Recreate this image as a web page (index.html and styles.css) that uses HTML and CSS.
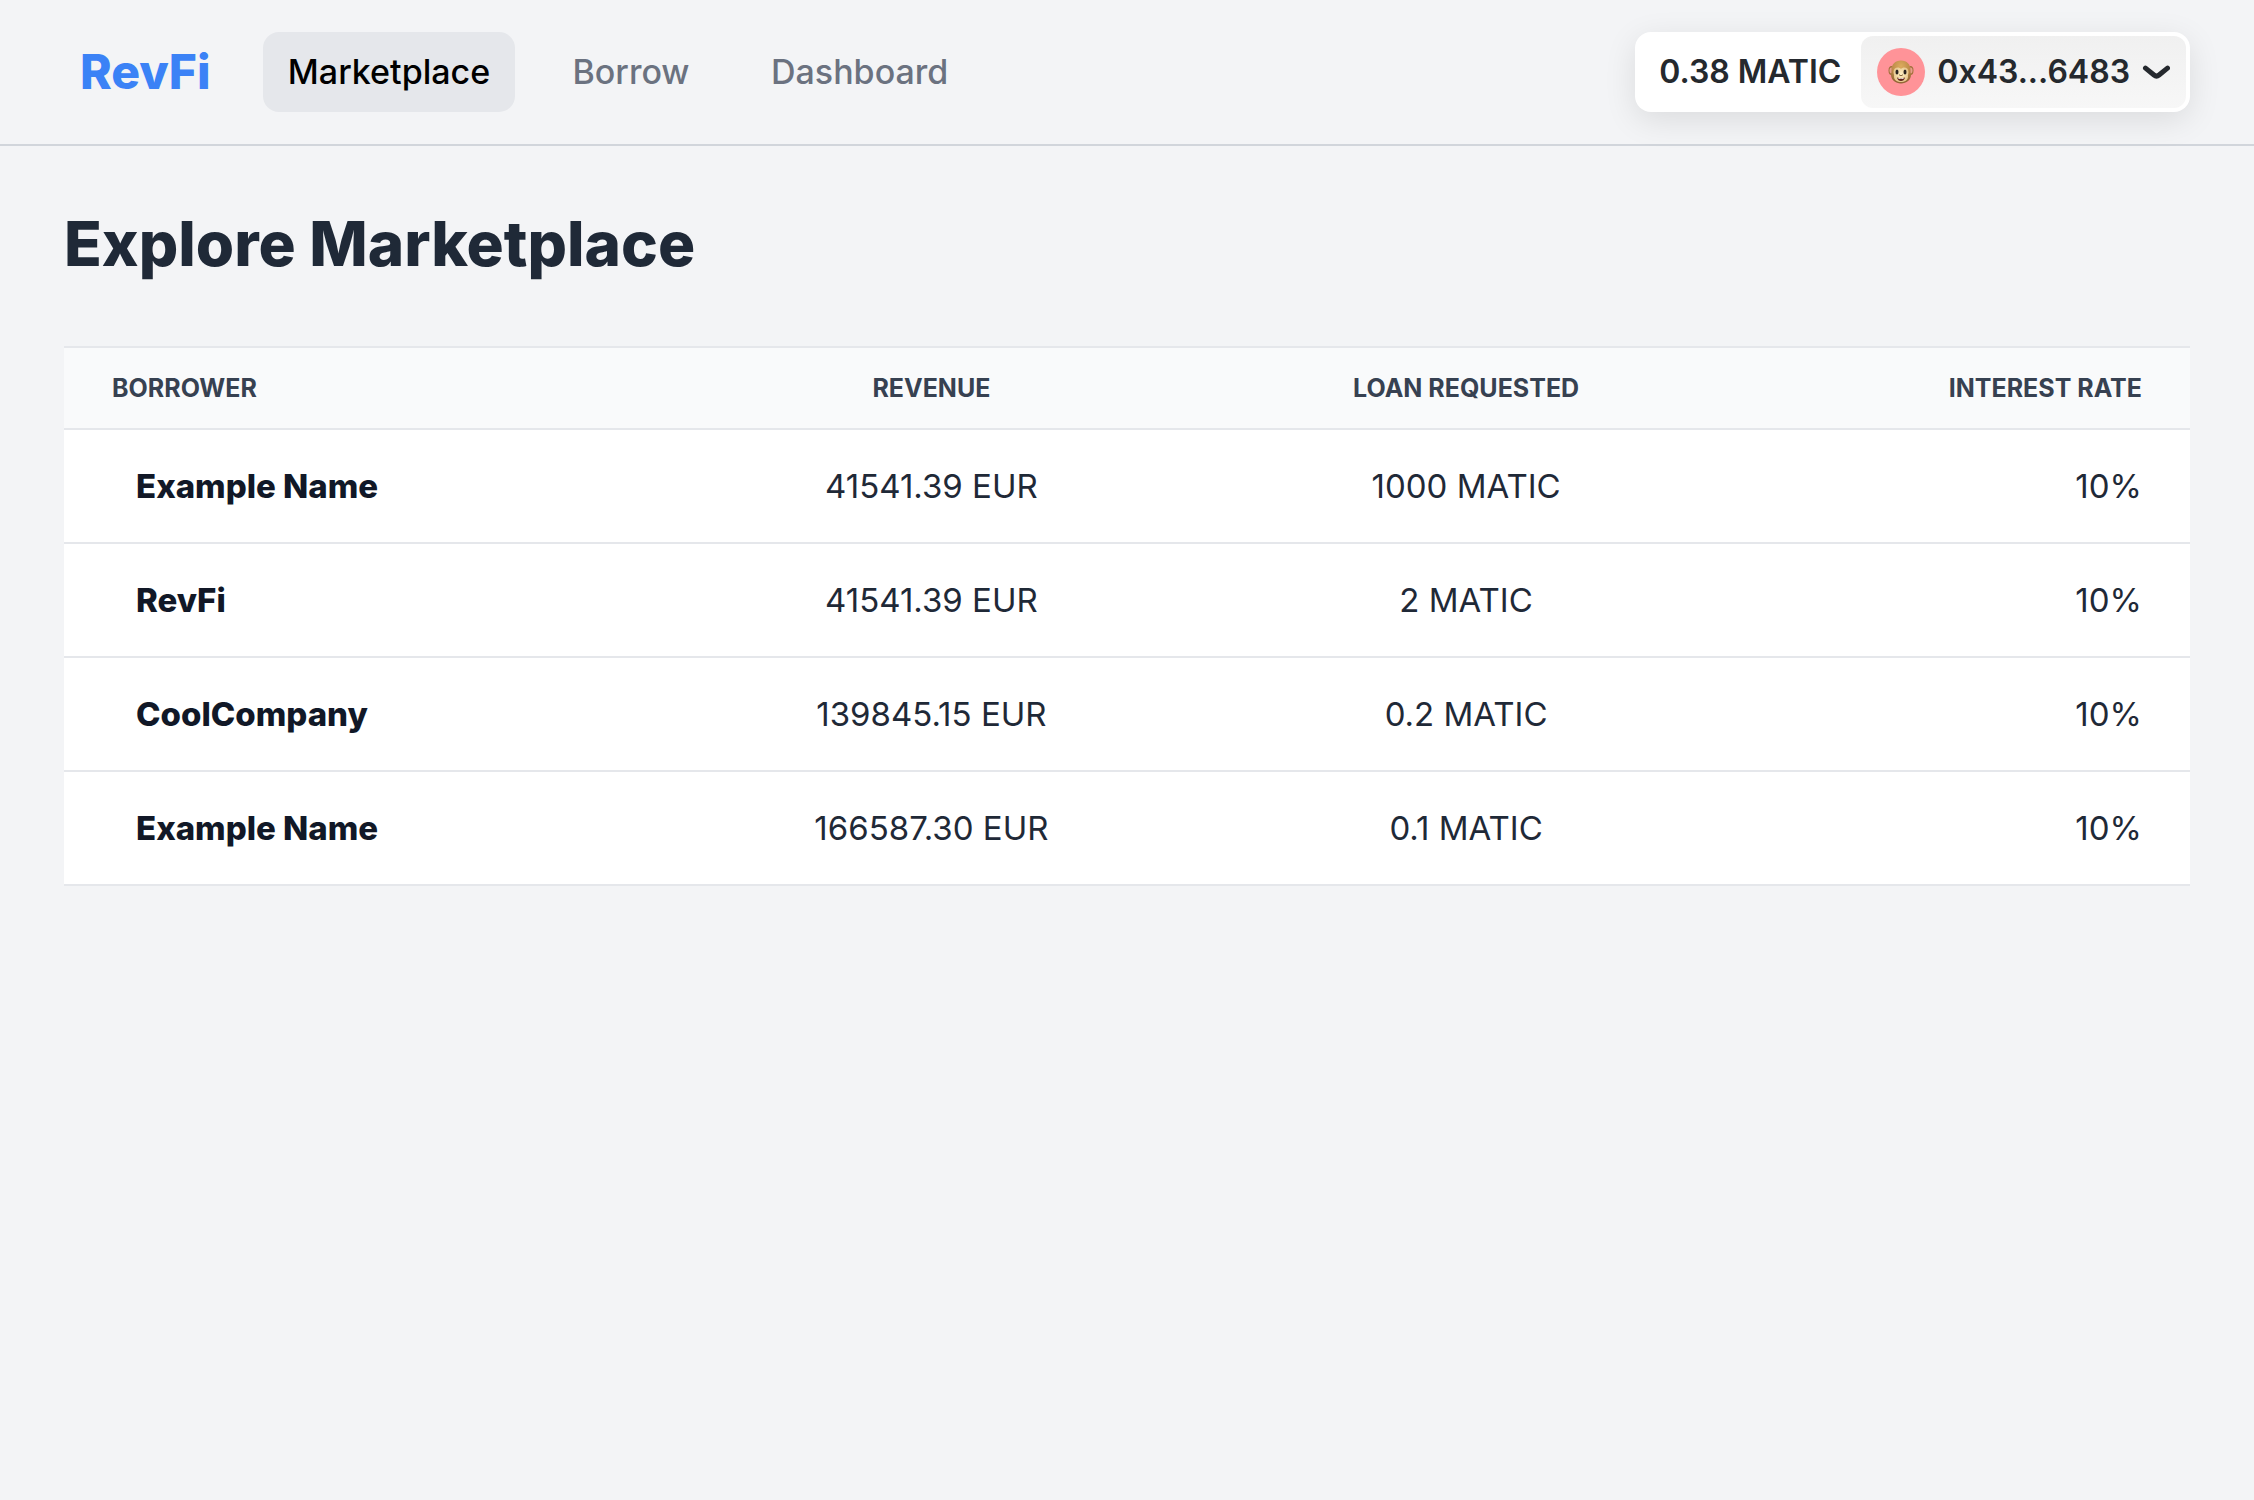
FILE: index.html
```html
<!DOCTYPE html>
<html lang="en">
<head>
  <meta charset="utf-8">
  <meta name="viewport" content="width=device-width, initial-scale=1">
  <title>RevFi Marketplace</title>
  <link rel="stylesheet" href="styles.css">
</head>
<body>
  <header class="topbar">
    <a class="logo" href="#">RevFi</a>
    <nav class="nav">
      <a class="nav-link nav-link-active" href="#" aria-current="page">Marketplace</a>
      <a class="nav-link" href="#">Borrow</a>
      <a class="nav-link" href="#">Dashboard</a>
    </nav>
    <div class="wallet">
      <span class="balance">0.38 MATIC</span>
      <button class="account" type="button">
        <span class="avatar">
          <svg width="26" height="24" viewBox="0 0 52 48" aria-hidden="true">
            <defs>
              <radialGradient id="fur" cx="50%" cy="25%" r="75%">
                <stop offset="0" stop-color="#dcab5e"/>
                <stop offset="0.6" stop-color="#bd8a49"/>
                <stop offset="1" stop-color="#8d6233"/>
              </radialGradient>
              <radialGradient id="skin" cx="50%" cy="45%" r="60%">
                <stop offset="0" stop-color="#fff0c4"/>
                <stop offset="1" stop-color="#e5c288"/>
              </radialGradient>
            </defs>
            <ellipse cx="7" cy="21" rx="6" ry="9" fill="#a3713b"/>
            <ellipse cx="45" cy="21" rx="6" ry="9" fill="#a3713b"/>
            <ellipse cx="7" cy="21" rx="4" ry="6" fill="#e89c8c"/>
            <ellipse cx="45" cy="21" rx="4" ry="6" fill="#e89c8c"/>
            <path d="M26 1C14 1 7 9 7 20c0 4 0 6-1 9 0 11 9 18 20 18s20-7 20-18c-1-3-1-5-1-9C45 9 38 1 26 1z" fill="url(#fur)"/>
            <path d="M26 18c-4-5-15-4-15 6 0 4 2 6 1 9 0 8 7 11 14 11s14-3 14-11c-1-3 1-5 1-9 0-10-11-11-15-6z" fill="url(#skin)"/>
            <ellipse cx="18" cy="24" rx="3" ry="5" fill="#2b2320"/>
            <ellipse cx="34" cy="24" rx="3" ry="5" fill="#2b2320"/>
            <path d="M23 30l2 1M29 30l-2 1" stroke="#76532e" stroke-width="2" stroke-linecap="round"/>
            <path d="M18 35c5 2 11 2 16 0-1 5-4 7-8 7s-7-2-8-7z" fill="#65251d"/>
            <path d="M21 36c3 1 7 1 10 0v2H21z" fill="#fff"/>
          </svg>
        </span>
        <span>0x43...6483</span>
        <svg width="28" height="14" viewBox="0 0 14 7" fill="none" aria-hidden="true">
          <path d="M12.75 1.54001L8.51647 5.0038C7.77974 5.60658 6.72026 5.60658 5.98352 5.0038L1.75 1.54001" stroke="currentColor" stroke-width="2.5" stroke-linecap="round" stroke-linejoin="round"/>
        </svg>
      </button>
    </div>
  </header>

  <main class="content">
    <h1 class="title">Explore Marketplace</h1>
    <table class="loans">
      <thead>
        <tr>
          <th class="col-borrower" scope="col">Borrower</th>
          <th class="col-revenue" scope="col">Revenue</th>
          <th class="col-loan" scope="col">Loan requested</th>
          <th class="col-rate" scope="col">Interest rate</th>
        </tr>
      </thead>
      <tbody>
        <tr><td class="name">Example Name</td><td>41541.39 EUR</td><td>1000 MATIC</td><td class="rate">10%</td></tr>
        <tr><td class="name">RevFi</td><td>41541.39 EUR</td><td>2 MATIC</td><td class="rate">10%</td></tr>
        <tr><td class="name">CoolCompany</td><td>139845.15 EUR</td><td>0.2 MATIC</td><td class="rate">10%</td></tr>
        <tr><td class="name">Example Name</td><td>166587.30 EUR</td><td>0.1 MATIC</td><td class="rate">10%</td></tr>
      </tbody>
    </table>
  </main>
</body>
</html>
```
FILE: styles.css
```css
* {
  box-sizing: border-box;
}

body {
  margin: 0;
  background: #f3f4f6;
  color: #1f2937;
  font-family: Inter, "Liberation Sans", sans-serif;
  font-size: 33px;
  line-height: 48px;
}

.topbar {
  display: flex;
  align-items: center;
  padding: 32px 64px 32px 80px;
  border-bottom: 2px solid #d1d5db;
}

.logo {
  min-width: 183px;
  color: #3b82f6;
  font-size: 48px;
  font-weight: 800;
  text-decoration: none;
}

.nav {
  display: flex;
  gap: 32px;
}

.nav-link {
  min-width: 168px;
  padding: 16px 24px;
  border-radius: 16px;
  color: #6b7280;
  font-size: 34px;
  font-weight: 500;
  text-align: center;
  text-decoration: none;
}

.nav-link-active {
  min-width: 252px;
  background: #e5e7eb;
  color: #000;
}

.wallet {
  display: flex;
  align-items: center;
  margin-left: auto;
  padding: 4px;
  border-radius: 16px;
  background: #fff;
  box-shadow: 0 8px 32px rgba(0, 0, 0, 0.1);
  color: #25292e;
  font-size: 32px;
  font-weight: 600;
}

.balance {
  padding: 0 20px;
}

.account {
  display: flex;
  align-items: center;
  gap: 12px;
  height: 72px;
  padding: 0 16px;
  border: 0;
  border-radius: 12px;
  background: linear-gradient(#f0f0f0, #f7f7f7);
  color: inherit;
  font: inherit;
}

.avatar {
  display: flex;
  align-items: center;
  justify-content: center;
  width: 48px;
  height: 48px;
  border-radius: 50%;
  background: #ff9398;
}

.content {
  padding: 64px;
}

.title {
  margin: 0 0 68px;
  font-size: 62px;
  font-weight: 800;
  line-height: 68px;
}

.loans {
  width: 100%;
  border-spacing: 0;
  border-top: 2px solid #e5e7eb;
  background: #fff;
  table-layout: fixed;
}

.loans th {
  padding: 16px 48px;
  border-bottom: 2px solid #e5e7eb;
  background: #f9fafb;
  color: #374151;
  font-size: 25px;
  font-weight: 700;
  text-align: center;
  text-transform: uppercase;
}

.loans td {
  padding: 32px 48px;
  border-bottom: 2px solid #e5e7eb;
  text-align: center;
}

.loans .col-borrower {
  width: 28.2%;
  text-align: left;
}

.col-revenue {
  width: 25.2%;
}

.col-loan {
  width: 25.1%;
}

.loans .col-rate,
.loans .rate {
  text-align: right;
}

.loans .name {
  padding-left: 72px;
  color: #111827;
  font-weight: 800;
  text-align: left;
}
```
